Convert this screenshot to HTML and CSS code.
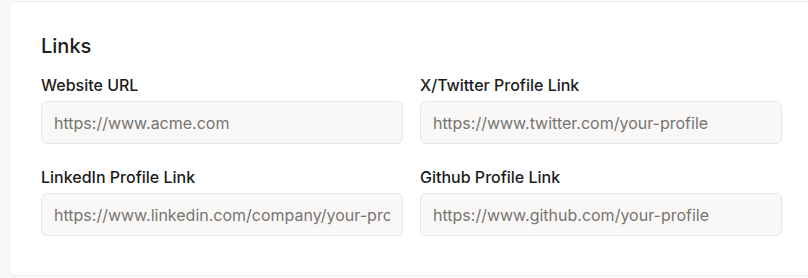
FILE: index.html
```html
<!DOCTYPE html>
<html lang="en">
<head>
    <meta charset="UTF-8">
    <meta name="viewport" content="width=device-width, initial-scale=1.0">
    <title>Links</title>
    <link rel="stylesheet" href="styles.css">
</head>
<body>
    <div class="card">
        <h2 class="card-title">Links</h2>
        <div class="fields">
            <div class="field">
                <label for="website">Website URL</label>
                <input type="text" id="website" class="input" placeholder="https://www.acme.com">
            </div>
            <div class="field">
                <label for="twitter">X/Twitter Profile Link</label>
                <input type="text" id="twitter" class="input" placeholder="https://www.twitter.com/your-profile">
            </div>
            <div class="field">
                <label for="linkedin">LinkedIn Profile Link</label>
                <input type="text" id="linkedin" class="input" placeholder="https://www.linkedin.com/company/your-profile">
            </div>
            <div class="field">
                <label for="github">Github Profile Link</label>
                <input type="text" id="github" class="input" placeholder="https://www.github.com/your-profile">
            </div>
        </div>
    </div>
</body>
</html>
```

FILE: styles.css
```css
body {
    margin: 0;
    padding: 1px 0 0 9px;
    background-color: #faf9f8;
    font-family: Inter, "Noto Sans", sans-serif;
    color: #1c1c1c;
    overflow: hidden;
}
.card {
    width: 805px;
    box-sizing: border-box;
    background-color: #fff;
    border: 1px solid #efedeb;
    border-radius: 6px;
    padding: 30px 31px 39px 31px;
}
.card-title {
    margin: 0 0 15px 0;
    font-size: 20px;
    font-weight: 450;
    line-height: 28px;
}
.fields {
    display: grid;
    grid-template-columns: 362px 362px;
    column-gap: 17px;
    row-gap: 23px;
}
.field {
    display: flex;
    flex-direction: column;
    gap: 6px;
}
.field label {
    font-size: 16px;
    font-weight: 450;
    line-height: 20px;
}
.input {
    height: 43px;
    box-sizing: border-box;
    padding: 0 12px;
    font-family: inherit;
    font-size: 16px;
    color: #1c1c1c;
    background-color: #faf8f7;
    border: 1px solid #e9e6e3;
    border-radius: 6px;
    outline: none;
}
.input::placeholder {
    color: #767472;
}
```
